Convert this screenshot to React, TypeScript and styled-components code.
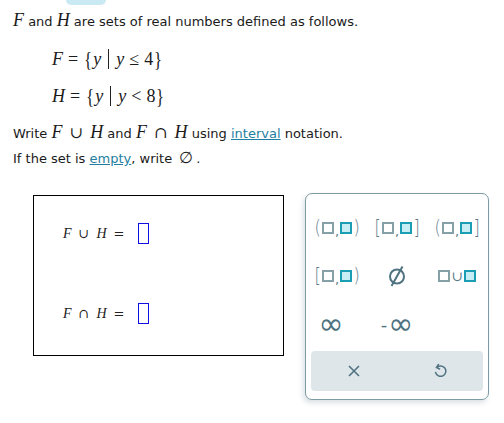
import { FC } from 'react';
import styled, { createGlobalStyle } from 'styled-components';

const GlobalStyle = createGlobalStyle`
  html, body {
    margin: 0;
    padding: 0;
    background: #fff;
  }
  body {
    font-family: "DejaVu Sans", Verdana, sans-serif;
    font-size: 13px;
    color: #1a1a1a;
  }
`;

const Page = styled.div`
  position: relative;
  width: 504px;
  height: 423px;
  overflow: hidden;
`;

const TopTab = styled.div`
  position: absolute;
  left: 66px;
  top: 0;
  width: 40px;
  height: 5px;
  background: #c9eaf2;
  border-radius: 0 0 8px 8px;
`;

const Prompt = styled.div`
  padding: 10px 0 0 13px;
`;

const Line = styled.div<{ $mt?: number }>`
  margin-top: ${p => p.$mt ?? 0}px;
  line-height: 20px;
  white-space: nowrap;
`;

const M = styled.span`
  font-family: "Liberation Serif", "Times New Roman", serif;
  font-style: italic;
  font-size: 18px;
`;

const MOp = styled.span`
  font-family: "DejaVu Serif", serif;
  font-size: 16px;
  margin: 0 3px;
`;

const Equation = styled.div<{ $mt: number }>`
  display: flex;
  align-items: center;
  margin: ${p => p.$mt}px 0 0 39px;
  font-family: "Liberation Serif", "Times New Roman", serif;
  font-size: 18px;
  height: 22px;
  white-space: nowrap;
`;

const Brace = styled.span`
  display: inline-block;
  font-size: 21px;
  transform: scaleX(0.8);
`;

const Mid = styled.span`
  display: inline-block;
  width: 1px;
  height: 20px;
  background: #222;
  margin: 0 7px;
`;

const Rel = styled.span`
  margin: 0 5px;
`;

const Link = styled.a`
  color: #1f7ea1;
  text-decoration: underline;
`;

const Workspace = styled.div`
  display: flex;
  align-items: flex-start;
  margin-top: 26px;
  padding-left: 33px;
`;

const AnswerBox = styled.div`
  width: 251px;
  height: 161px;
  border: 1px solid #000;
  box-sizing: border-box;
  padding: 27px 0 0 29px;
  display: flex;
  flex-direction: column;
  gap: 59px;
`;

const AnswerRow = styled.div`
  display: flex;
  align-items: center;
  height: 21px;
`;

const Var = styled.span`
  font-family: "Liberation Serif", "Times New Roman", serif;
  font-style: italic;
  font-size: 14px;
  color: #222;
`;

const Op = styled.span`
  font-family: "DejaVu Serif", serif;
  font-size: 13px;
  color: #222;
  margin: 0 7px;
`;

const Blank = styled.span`
  width: 9px;
  height: 19px;
  border: 1px solid #1010e0;
  margin-left: 6px;
`;

const Palette = styled.div`
  margin-left: 21px;
  margin-top: -2px;
  width: 184px;
  height: 207px;
  box-sizing: border-box;
  border: 1px solid #7d9ba5;
  border-radius: 7px;
  box-shadow: -2px 3px 5px rgba(120, 140, 150, 0.25);
  background: #fff;
  padding: 10px 5px 8px 5px;
  display: flex;
  flex-direction: column;
`;

const Grid = styled.div`
  display: grid;
  grid-template-columns: repeat(3, 60px);
  grid-auto-rows: 48px;
  margin: 0 -4px;
`;

const Key = styled.div<{ $shift?: number }>`
  display: flex;
  align-items: center;
  justify-content: center;
  color: #4f7380;
  font-family: "DejaVu Sans", sans-serif;
  transform: translateX(${p => p.$shift ?? 0}px);
`;

const Bracket = styled.span`
  font-family: "DejaVu Sans", sans-serif;
  font-size: 19px;
  font-weight: 200;
  color: #5b7c88;
  line-height: 1;
  transform: translateY(-1px) scaleX(0.85);
  margin: 0 1px;
`;

const Sq = styled.span<{ $on?: boolean }>`
  display: inline-block;
  width: 8px;
  height: 8px;
  border: 2px solid ${p => (p.$on ? '#1b9db3' : '#86a0a8')};
  background: ${p => (p.$on ? '#c8eef5' : '#fff')};
`;

const Comma = styled.span`
  font-size: 13px;
  color: #5b7c88;
  margin: 0 1px;
  transform: translateY(3px);
`;

const Cup = styled.span`
  font-family: "DejaVu Serif", serif;
  font-size: 14px;
  color: #5b7c88;
  margin: 0 1px;
`;

const Inf = styled.span`
  font-size: 30px;
  line-height: 1;
  color: #4f7380;
`;

const Minus = styled.span`
  font-size: 18px;
  color: #4f7380;
  margin-right: 1px;
`;

const Bar = styled.div`
  margin-top: 3px;
  height: 42px;
  background: #dee6e9;
  border-radius: 4px;
  display: grid;
  grid-template-columns: 1fr 1fr;
  align-items: center;
  justify-items: center;
  color: #4f7380;
`;

const IntervalKey: FC<{ open: string; close: string }> = ({ open, close }) => (
  <Key>
    <Bracket>{open}</Bracket>
    <Sq />
    <Comma>,</Comma>
    <Sq $on />
    <Bracket>{close}</Bracket>
  </Key>
);

export default function App() {
  return (
    <Page>
      <GlobalStyle />
      <TopTab />
      <Prompt>
        <Line>
          <M>F</M> and <M>H</M> are sets of real numbers defined as follows.
        </Line>
        <Equation $mt={16}>
          <i>F</i>
          <Rel>=</Rel>
          <Brace>{'{'}</Brace>
          <i>y</i>
          <Mid />
          <i>y</i>
          <Rel>≤</Rel>4<Brace>{'}'}</Brace>
        </Equation>
        <Equation $mt={15}>
          <i>H</i>
          <Rel>=</Rel>
          <Brace>{'{'}</Brace>
          <i>y</i>
          <Mid />
          <i>y</i>
          <Rel>&lt;</Rel>8<Brace>{'}'}</Brace>
        </Equation>
        <Line $mt={15}>
          Write <M>F</M> <MOp>∪</MOp> <M>H</M> and <M>F</M> <MOp>∩</MOp> <M>H</M> using{' '}
          <Link>interval</Link> notation.
        </Line>
        <Line $mt={4}>
          If the set is <Link>empty</Link>, write <MOp>∅</MOp>.
        </Line>
      </Prompt>
      <Workspace>
        <AnswerBox>
          <AnswerRow>
            <Var>F</Var>
            <Op>∪</Op>
            <Var>H</Var>
            <Op>=</Op>
            <Blank />
          </AnswerRow>
          <AnswerRow>
            <Var>F</Var>
            <Op>∩</Op>
            <Var>H</Var>
            <Op>=</Op>
            <Blank />
          </AnswerRow>
        </AnswerBox>
        <Palette>
          <Grid>
            <IntervalKey open="(" close=")" />
            <IntervalKey open="[" close="]" />
            <IntervalKey open="(" close="]" />
            <IntervalKey open="[" close=")" />
            <Key>
              <svg width="20" height="22" viewBox="0 0 20 22">
                <circle cx="10" cy="11.5" r="7" fill="none" stroke="#4f7380" strokeWidth="2" />
                <line x1="15.5" y1="1.5" x2="4.5" y2="21" stroke="#4f7380" strokeWidth="2" />
              </svg>
            </Key>
            <Key>
              <Sq />
              <Cup>∪</Cup>
              <Sq $on />
            </Key>
            <Key $shift={-6}>
              <Inf>∞</Inf>
            </Key>
            <Key>
              <Minus>-</Minus>
              <Inf>∞</Inf>
            </Key>
          </Grid>
          <Bar>
            <svg width="14" height="14" viewBox="0 0 14 14">
              <path d="M2 2 L12 12 M12 2 L2 12" stroke="#4f7380" strokeWidth="1.6" />
            </svg>
            <svg width="14" height="17" viewBox="0 0 14 17">
              <path
                d="M5.5 1.5 L3.5 4.5 L6.5 6 M3.8 4.6 A5.2 5.2 0 1 1 2.6 9.5"
                fill="none"
                stroke="#4f7380"
                strokeWidth="1.5"
                strokeLinecap="round"
              />
            </svg>
          </Bar>
        </Palette>
      </Workspace>
    </Page>
  );
}
